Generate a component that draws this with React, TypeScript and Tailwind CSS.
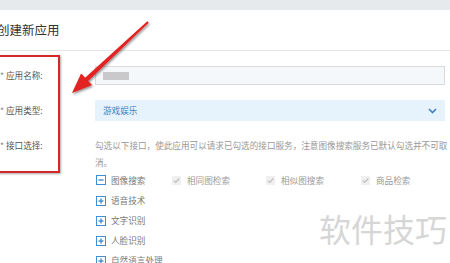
import React from "react"

const font = { fontFamily: '"Noto Sans CJK SC", "Noto Sans", sans-serif' }

function TreeIcon({ open }: { open?: boolean }) {
  return (
    <svg width="10" height="10" viewBox="0 0 10 10" className="shrink-0">
      <rect x="0.5" y="0.5" width="9" height="9" fill="white" stroke="#3d8fd6" />
      <path d="M2.5 5h5" stroke="#3d8fd6" strokeWidth="1.4" />
      {!open && <path d="M5 2.5v5" stroke="#3d8fd6" strokeWidth="1.4" />}
    </svg>
  )
}

function Check({ label }: { label: string }) {
  return (
    <div className="flex items-center gap-[6px]">
      <svg width="9" height="9" viewBox="0 0 9 9" className="shrink-0">
        <rect width="9" height="9" fill="#f0f0f0" />
        <path d="M1.8 4.6l1.9 1.9 3.6-4" fill="none" stroke="#bdbdbd" strokeWidth="1.2" />
      </svg>
      <span className="text-[#9a9a9a]">{label}</span>
    </div>
  )
}

const tree = ["语音技术", "文字识别", "人脸识别", "自然语言处理"]

export default function App() {
  return (
    <div className="relative h-[263px] w-[450px] overflow-hidden bg-white" style={font}>
      <div className="h-[10px] bg-[#e6eaed]" />

      <div className="flex h-[40px] items-center -ml-[3px] text-[12.5px] text-[#333]">创建新应用</div>
      <div className="h-px bg-[#e6e6e6]" />

      <div className="mt-[15px] flex flex-col text-[8.6px]">
        <div className="flex items-center">
          <div className="w-[95px] shrink-0 text-[#555]">
            <span className="text-[#888]">*</span> 应用名称:
          </div>
          <div className="flex h-[19px] w-[350px] items-center border border-[#dadada] bg-[#f5f8fb] pl-[7px]">
            <div className="h-[8px] w-[26px] bg-[#c9c9cc] blur-[0.6px]" />
          </div>
        </div>

        <div className="mt-[15px] flex items-center">
          <div className="w-[95px] shrink-0 text-[#555]">
            <span className="text-[#888]">*</span> 应用类型:
          </div>
          <div className="flex h-[21px] w-[350px] items-center justify-between bg-[#e7f3fc] pl-[8px] pr-[8px]">
            <span className="text-[#3d80c2]">游戏娱乐</span>
            <svg width="9" height="6" viewBox="0 0 9 6">
              <path d="M1 1l3.5 3.5L8 1" fill="none" stroke="#3d80c2" strokeWidth="1.6" />
            </svg>
          </div>
        </div>

        <div className="mt-[15.5px] flex">
          <div className="w-[95px] shrink-0 leading-[17px] text-[#555]">
            <span className="text-[#888]">*</span> 接口选择:
          </div>
          <div className="w-[352px] shrink-0">
            <p className="whitespace-nowrap leading-[17px] text-[#999]">
              勾选以下接口，使此应用可以请求已勾选的接口服务，注意图像搜索服务已默认勾选并不可取
              <br />
              消。
            </p>
            <div className="flex h-[20px] items-center pl-[1px]">
              <div className="flex w-[76px] items-center gap-[5px]">
                <TreeIcon open />
                <span className="text-[#777]">图像搜索</span>
              </div>
              <div className="w-[94px]">
                <Check label="相同图检索" />
              </div>
              <div className="w-[95px]">
                <Check label="相似图搜索" />
              </div>
              <Check label="商品检索" />
            </div>
            {tree.map((t) => (
              <div key={t} className="flex h-[20px] items-center gap-[5px] pl-[1px]">
                <TreeIcon />
                <span className="text-[#777]">{t}</span>
              </div>
            ))}
          </div>
        </div>
      </div>

      {/* annotation overlay */}
      <div className="absolute left-[-6px] top-[55px] h-[118px] w-[66px] border-2 border-[#d3272b] shadow-[1px_1px_2px_rgba(0,0,0,0.35)]" />
      <svg className="absolute left-0 top-0" width="450" height="263">
        <defs>
          <filter id="sh" x="-20%" y="-20%" width="140%" height="140%">
            <feDropShadow dx="1" dy="1.5" stdDeviation="0.8" floodColor="#000" floodOpacity="0.45" />
          </filter>
        </defs>
        <polygon
          points="147.3,21.3 85.1,77.7 81.1,73.5 72,93 92.1,85.1 88.1,80.9 148.7,22.7"
          fill="#e32020"
          filter="url(#sh)"
        />
      </svg>
      <div className="absolute left-[319px] top-[212px] text-[32px] leading-[32px] text-[#d6d6d6]">软件技巧</div>
    </div>
  )
}
